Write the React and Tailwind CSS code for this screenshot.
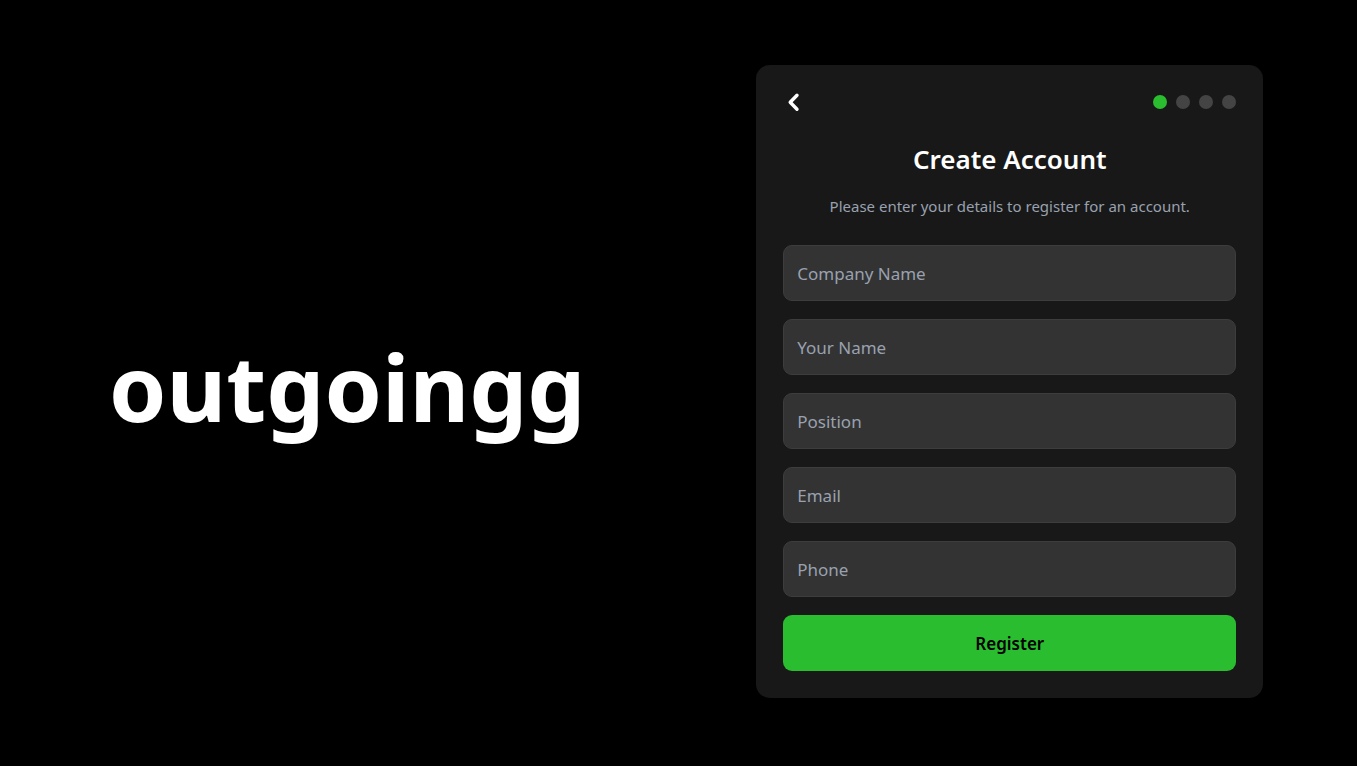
const fields = [
  { id: "company", label: "Company Name", type: "text" },
  { id: "name", label: "Your Name", type: "text" },
  { id: "position", label: "Position", type: "text" },
  { id: "email", label: "Email", type: "email" },
  { id: "phone", label: "Phone", type: "tel" },
];

const steps = [1, 2, 3, 4];

export default function App() {
  return (
    <div className="flex min-h-screen items-center bg-black px-4 pb-1 font-['Segoe_UI','Noto_Sans',sans-serif] text-white">
      <div className="flex flex-1 justify-center pt-3">
        <h1 className="text-[92px] leading-none font-bold">outgoingg</h1>
      </div>
      <main className="flex flex-1 justify-center">
        <div className="w-full max-w-[507px] rounded-[14px] bg-[#181818] p-[27px]">
          <div className="flex h-5 items-center justify-between">
            <button type="button" aria-label="Back" className="flex size-5 items-center justify-center">
              <svg
                viewBox="0 0 20 20"
                className="size-5"
                fill="none"
                stroke="currentColor"
                strokeWidth="3.4"
                strokeLinecap="round"
                strokeLinejoin="round"
                aria-hidden="true"
              >
                <path d="M14 3.2 7.2 10.2 14 17.2" />
              </svg>
            </button>
            <div className="flex gap-[9px]">
              {steps.map((s) => (
                <span key={s} className={s === 1 ? "size-[14px] rounded-full bg-[#2abd2f]" : "size-[14px] rounded-full bg-[#444444]"} />
              ))}
            </div>
          </div>
          <h2 className="mt-[29px] text-center text-[26px] leading-9 font-semibold">Create Account</h2>
          <p className="mt-[17px] text-center text-[15px] leading-6 text-gray-400">
            Please enter your details to register for an account.
          </p>
          <form className="mt-[27px] flex flex-col gap-[18px]" onSubmit={(e) => e.preventDefault()}>
            {fields.map((f) => (
              <input
                key={f.id}
                id={f.id}
                name={f.id}
                type={f.type}
                aria-label={f.label}
                placeholder={f.label}
                className="h-14 w-full rounded-[9px] border border-[#3d3d3d] bg-[#333333] px-[13px] pt-0.5 text-[17px] text-white placeholder:text-gray-400"
              />
            ))}
            <button type="submit" className="h-14 w-full rounded-[9px] bg-[#2abd2f] pt-0.5 text-[17px] font-semibold text-black">
              Register
            </button>
          </form>
        </div>
      </main>
    </div>
  );
}
